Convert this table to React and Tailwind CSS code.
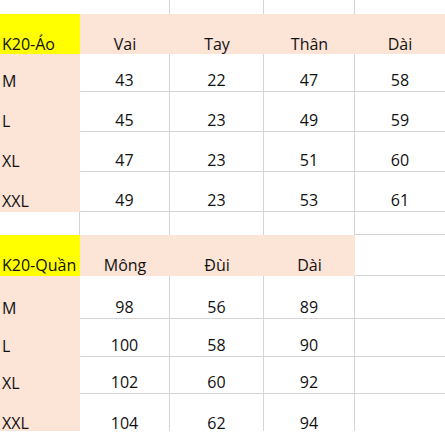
import React from 'react';

const widths = ['w-[80px]', 'w-[90px]', 'w-[94px]', 'w-[91px]', 'w-[90px]'];

const Cell = ({ col, fill, r, b, left, pad = 'pb-[3px]', children }) => {
    const bg = fill === 'yellow' ? 'bg-[#ffff00]' : fill === 'peach' ? 'bg-[#fce4d6]' : 'bg-white';
    return (
        <div
            className={`${widths[col]} ${bg} ${r ? 'border-r' : ''} ${b ? 'border-b' : ''} border-[#d4d4d4] h-full flex items-end ${left ? 'justify-start pl-[2px]' : 'justify-center'} ${pad} shrink-0`}
        >
            <span className="leading-none">{children}</span>
        </div>
    );
};

const Row = ({ h, children }) => <div className={`flex ${h}`}>{children}</div>;

const shirt = [
    ['M', '43', '22', '47', '58'],
    ['L', '45', '23', '49', '59'],
    ['XL', '47', '23', '51', '60'],
    ['XXL', '49', '23', '53', '61'],
];
const shirtH = ['h-[38px]', 'h-[40px]', 'h-[40px]', 'h-[40px]'];

const pants = [
    ['M', '98', '56', '89'],
    ['L', '100', '58', '90'],
    ['XL', '102', '60', '92'],
    ['XXL', '104', '62', '94'],
];
const pantsH = ['h-[43px]', 'h-[38px]', 'h-[37px]', 'h-[37px]'];

const App = () => {
    return (
        <div className="w-[445px] h-[445px] bg-white overflow-hidden text-[16px] text-[#111]" style={{ fontFamily: '"Open Sans", sans-serif' }}>
            {/* top empty row */}
            <Row h="h-[14px]">
                <Cell col={0} />
                <Cell col={1} r />
                <Cell col={2} r />
                <Cell col={3} r />
                <Cell col={4} />
            </Row>

            <Row h="h-[40px]">
                <Cell col={0} fill="yellow" left pad="pb-[2px]">K20-Áo</Cell>
                <Cell col={1} fill="peach" pad="pb-[2px]">Vai</Cell>
                <Cell col={2} fill="peach" pad="pb-[2px]">Tay</Cell>
                <Cell col={3} fill="peach" pad="pb-[2px]">Thân</Cell>
                <Cell col={4} fill="peach" pad="pb-[2px]">Dài</Cell>
            </Row>

            {shirt.map((row, i) => (
                <Row key={row[0]} h={shirtH[i]}>
                    <Cell col={0} fill="peach" left>{row[0]}</Cell>
                    <Cell col={1} r b>{row[1]}</Cell>
                    <Cell col={2} r b>{row[2]}</Cell>
                    <Cell col={3} r b>{row[3]}</Cell>
                    <Cell col={4} b>{row[4]}</Cell>
                </Row>
            ))}

            {/* gap row */}
            <Row h="h-[23px]">
                <Cell col={0} r />
                <Cell col={1} r />
                <Cell col={2} r />
                <Cell col={3} r />
                <Cell col={4} b />
            </Row>

            <Row h="h-[41px]">
                <Cell col={0} fill="yellow" left>K20-Quần</Cell>
                <Cell col={1} fill="peach">Mông</Cell>
                <Cell col={2} fill="peach">Đùi</Cell>
                <Cell col={3} fill="peach">Dài</Cell>
                <Cell col={4} b />
            </Row>

            {pants.map((row, i) => (
                <Row key={row[0]} h={pantsH[i]}>
                    <Cell col={0} fill="peach" left pad={i === 3 ? 'pb-0' : 'pb-[3px]'}>{row[0]}</Cell>
                    <Cell col={1} r b={i < 3} pad={i === 3 ? 'pb-0' : 'pb-[3px]'}>{row[1]}</Cell>
                    <Cell col={2} r b={i < 3} pad={i === 3 ? 'pb-0' : 'pb-[3px]'}>{row[2]}</Cell>
                    <Cell col={3} r b={i < 3} pad={i === 3 ? 'pb-0' : 'pb-[3px]'}>{row[3]}</Cell>
                    <Cell col={4} b={i < 3} />
                </Row>
            ))}
        </div>
    );
};

export default App;
